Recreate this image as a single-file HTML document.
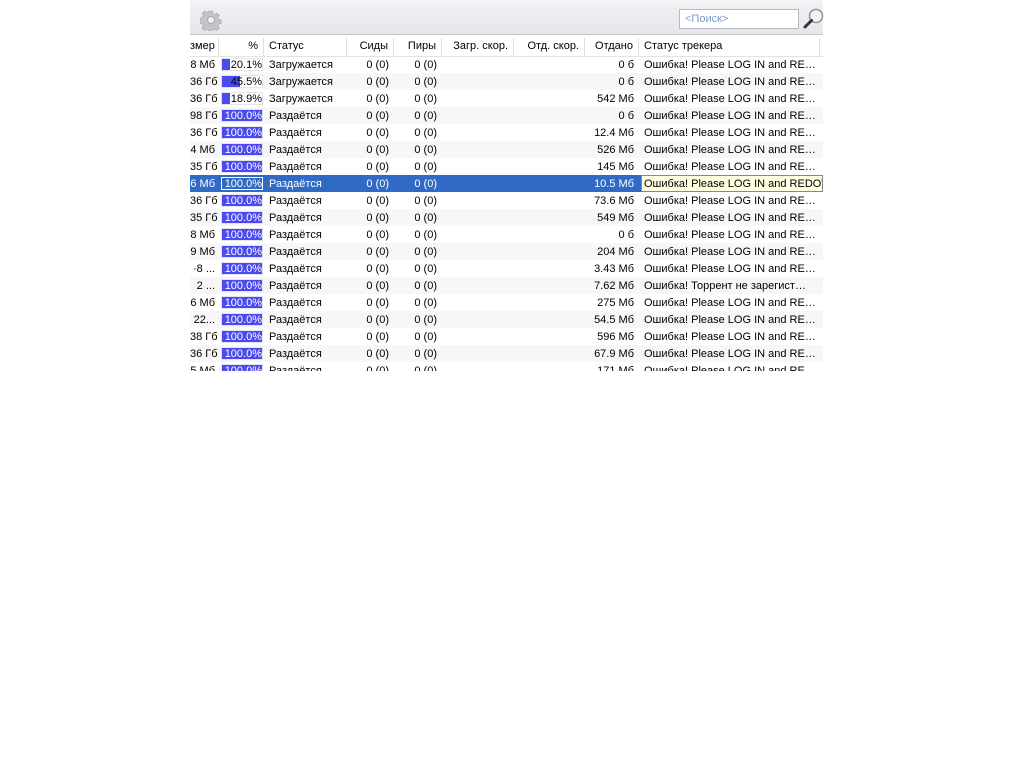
<!DOCTYPE html>
<html><head><meta charset="utf-8"><style>
body{margin:0;width:1024px;height:768px;background:#fff;font-family:"Liberation Sans","DejaVu Sans",sans-serif;font-size:11px;overflow:hidden;position:relative}
#tb{position:absolute;left:190px;top:4px;width:633px;height:30px;background:linear-gradient(#f0f0f3,#e6e6ea);border-bottom:1px solid #c8c8cc}
#top{position:absolute;left:190px;top:0;width:633px;height:4px;background:#f4f4f6}
#search{position:absolute;left:489px;top:5px;width:120px;height:20px;background:#fff;border:1px solid #b8b8c0;color:#7a9ac8;font-size:11px;line-height:19px;padding-left:5px;box-sizing:border-box}
#hdr{position:absolute;left:190px;top:38px;width:633px;height:18px;border-bottom:1px solid #e2e2e2}
.c{position:absolute;top:0;height:17px;line-height:18px;white-space:nowrap;overflow:hidden;box-sizing:border-box;color:#000}
#hdr .c{height:18px;line-height:17px;border-right:1px solid #e0e0e0}
.r{text-align:right;padding-right:5px}
.l{padding-left:5px}
#rows{position:absolute;left:190px;top:56px;width:633px;height:315px;overflow:hidden}
.row{position:relative;height:17px;width:633px}
.row.alt{background:#f7f7f9}
.row.sel{background:#316ac5}
.row.sel .c{color:#fff}
.pc{position:absolute;left:31px;top:2px;width:42px;height:13px;border:1px solid #e4e4e8;box-sizing:border-box;background:#fff}
.pc .b{position:absolute;left:0;top:0;height:11px;background:#4a4af0}
.pc .t{position:absolute;left:0;top:0;width:40px;text-align:right;line-height:12px;font-size:11px;color:#000}
.pc.f .t{color:#fff}
.sel .pc{border:1px solid #fff;background:#316ac5}
.sel .pc .b{display:none}
.tip{background:#ffffe1 !important;color:#000 !important;border:1px solid #888;padding-left:2px !important;line-height:16px !important}
</style></head><body>
<div id="top"></div>
<div id="tb">
<svg style="position:absolute;left:10px;top:5px" width="22" height="22" viewBox="0 0 22 22"><g fill="#c4c4c8" stroke="#a8a8ae" stroke-width="0.8"><path d="M9 1h4l.6 3 2.2 1 2.6-1.7 2.8 2.8-1.7 2.6 1 2.2 3 .6v4l-3 .6-1 2.2 1.7 2.6-2.8 2.8-2.6-1.7-2.2 1-.6 3H9l-.6-3-2.2-1-2.6 1.7-2.8-2.8 1.7-2.6-1-2.2-3-.6V9l3-.6 1-2.2L1.3 3.6 4.1.8l2.6 1.7 2.2-1z" transform="scale(.85) translate(1.5 1.5)"/></g><circle cx="11" cy="11" r="3.5" fill="#f2f2f4" stroke="#a8a8ae"/></svg>
<div id="search">&lt;Поиск&gt;</div>
<svg style="position:absolute;left:613px;top:3px" width="22" height="24" viewBox="0 0 22 24"><circle cx="13" cy="9" r="6.5" fill="#f4f4f6" stroke="#909098" stroke-width="1.5"/><path d="M8.5 13.5L2 20" stroke="#333" stroke-width="3" stroke-linecap="round"/></svg>
</div>
<div id="hdr">
<div class="c r" style="left:0;width:29px">змер</div>
<div class="c r" style="left:29px;width:45px">%</div>
<div class="c l" style="left:74px;width:83px">Статус</div>
<div class="c r" style="left:157px;width:47px">Сиды</div>
<div class="c r" style="left:204px;width:48px">Пиры</div>
<div class="c r" style="left:252px;width:72px">Загр. скор.</div>
<div class="c r" style="left:324px;width:71px">Отд. скор.</div>
<div class="c r" style="left:395px;width:54px">Отдано</div>
<div class="c l" style="left:449px;width:181px">Статус трекера</div>
</div>
<div id="rows">
<script>
var d=[["8 Мб",20.1,"Загружается","0 б"],["36 Гб",45.5,"Загружается","0 б"],["36 Гб",18.9,"Загружается","542 Мб"],["98 Гб",100,"Раздаётся","0 б"],["36 Гб",100,"Раздаётся","12.4 Мб"],["4 Мб",100,"Раздаётся","526 Мб"],["35 Гб",100,"Раздаётся","145 Мб"],["6 Мб",100,"Раздаётся","10.5 Мб"],["36 Гб",100,"Раздаётся","73.6 Мб"],["35 Гб",100,"Раздаётся","549 Мб"],["8 Мб",100,"Раздаётся","0 б"],["9 Мб",100,"Раздаётся","204 Мб"],["·8 ...",100,"Раздаётся","3.43 Мб"],["2 ...",100,"Раздаётся","7.62 Мб"],["6 Мб",100,"Раздаётся","275 Мб"],["22...",100,"Раздаётся","54.5 Мб"],["38 Гб",100,"Раздаётся","596 Мб"],["36 Гб",100,"Раздаётся","67.9 Мб"],["5 Мб",100,"Раздаётся","171 Мб"]];
var h="";
d.forEach(function(r,i){
var cls="row"+(i==7?" sel":(i%2?" alt":""));
var p=r[1];var ps=p.toFixed(1)+"%";
var tr=i==13?"Ошибка! Торрент не зарегист…":"Ошибка! Please LOG IN and RE…";
var tc=i==7?'<div class="c tip" style="left:451px;width:182px;top:0">Ошибка! Please LOG IN and REDOWNLOAD</div>':'<div class="c l" style="left:449px;width:181px">'+tr+'</div>';
h+='<div class="'+cls+'"><div class="c r" style="left:0;width:29px;padding-right:4px">'+r[0]+'</div>'+
'<div class="pc'+(p>=100?' f':'')+'"><div class="b" style="width:'+(40*p/100)+'px"></div><div class="t">'+ps+'</div></div>'+
'<div class="c l" style="left:74px;width:83px">'+r[2]+'</div>'+
'<div class="c r" style="left:157px;width:47px">0 (0)</div>'+
'<div class="c r" style="left:204px;width:48px">0 (0)</div>'+
'<div class="c r" style="left:395px;width:54px">'+r[3]+'</div>'+tc+'</div>';
});
document.write(h);
</script>
</div>
</body></html>
